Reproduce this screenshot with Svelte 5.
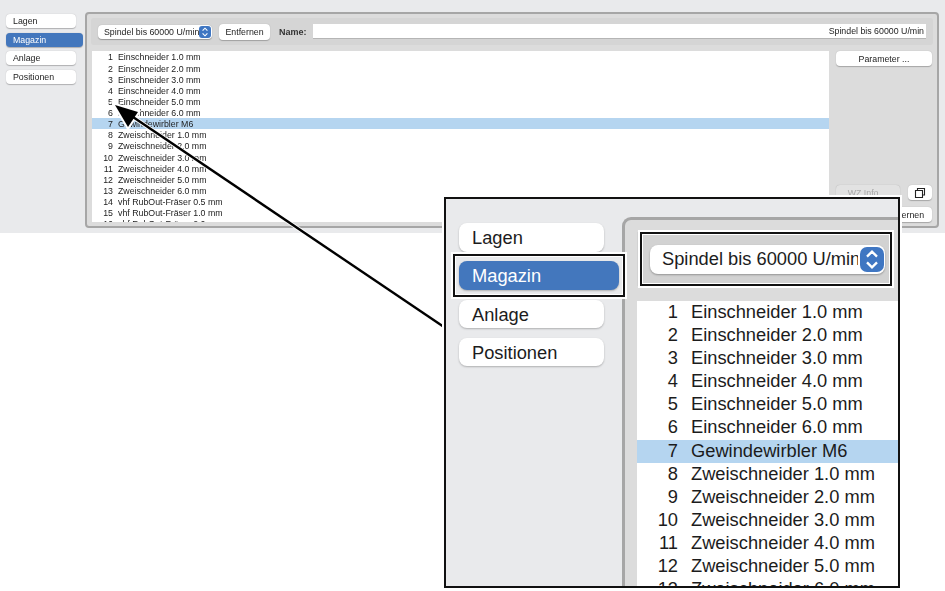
<script lang="ts">
  const tabs = ["Lagen", "Magazin", "Anlage", "Positionen"];
  const active = "Magazin";
  const spindle = "Spindel bis 60000 U/min";

  const tools = [
    "Einschneider 1.0 mm",
    "Einschneider 2.0 mm",
    "Einschneider 3.0 mm",
    "Einschneider 4.0 mm",
    "Einschneider 5.0 mm",
    "Einschneider 6.0 mm",
    "Gewindewirbler M6",
    "Zweischneider 1.0 mm",
    "Zweischneider 2.0 mm",
    "Zweischneider 3.0 mm",
    "Zweischneider 4.0 mm",
    "Zweischneider 5.0 mm",
    "Zweischneider 6.0 mm",
    "vhf RubOut-Fräser 0.5 mm",
    "vhf RubOut-Fräser 1.0 mm",
    "vhf RubOut-Fräser 2.0 mm",
  ];
  const selected = 7;
</script>

{#snippet sidebar()}
  <nav class="tabs">
    {#each tabs as tab}
      <div class="tab" class:active={tab === active}>{tab}</div>
    {/each}
  </nav>
{/snippet}

{#snippet select()}
  <div class="select">
    <span class="select-text">{spindle}</span>
    <span class="stepper">
      <svg viewBox="0 0 12 14" aria-hidden="true">
        <path d="M3.2 5.4 6 2.6l2.8 2.8M3.2 8.6 6 11.4l2.8-2.8" />
      </svg>
    </span>
  </div>
{/snippet}

{#snippet list()}
  <div class="list">
    {#each tools as tool, i}
      <div class="row" class:selected={i + 1 === selected}>
        <span class="num">{i + 1}</span>
        <span>{tool}</span>
      </div>
    {/each}
  </div>
{/snippet}

<div class="page">
  <section class="shot">
    {@render sidebar()}
    <div class="panel">
      <div class="topbar">
        {@render select()}
        <button class="btn remove">Entfernen</button>
        <span class="name-label">Name:</span>
        <div class="name-input">{spindle}</div>
      </div>
      <div class="body">
        {@render list()}
        <aside class="side">
          <button class="btn">Parameter ...</button>
          <div class="side-row">
            <button class="btn info">WZ Info ...</button>
            <button class="btn copy" aria-label="Kopieren">
              <svg viewBox="0 0 12 12" aria-hidden="true">
                <path d="M3.5 3V1.5h7v6.5H8.5M1.5 3.5h7v7h-7z" />
              </svg>
            </button>
          </div>
          <button class="btn remove-tool">Entfernen</button>
        </aside>
      </div>
    </div>
  </section>

  <svg class="arrow" viewBox="0 0 945 591" aria-hidden="true">
    <path class="halo" d="M444 327 130 115" />
    <path class="halo" d="M115 105 138 112 128 127Z" />
    <path class="line" d="M444 327 130 115" />
    <path class="head" d="M115 105 138 112 128 127Z" />
  </svg>

  <section class="callout">
    {@render sidebar()}
    <div class="panel">
      <div class="topbar">
        {@render select()}
      </div>
      {@render list()}
    </div>
    <div class="mark mark-tab"></div>
    <div class="mark mark-select"></div>
  </section>
</div>

<style>
  :global(body) {
    margin: 0;
    background: #fff;
  }
  .page {
    position: relative;
    width: 945px;
    height: 591px;
    overflow: hidden;
    background: #fff;
    font-family: "Liberation Sans", Arial, sans-serif;
    color: #1c1c1c;
  }

  /* small screenshot at the top */
  .shot {
    display: flex;
    box-sizing: border-box;
    height: 233px;
    padding: 12px 6px 5px 6px;
    background: #e9eaec;
    font-size: 8.8px;
    filter: blur(0.3px);
  }
  .shot .tabs {
    display: flex;
    flex-direction: column;
    gap: 4.7px;
    width: 79px;
    padding-top: 2px;
  }
  .shot .tab {
    box-sizing: border-box;
    width: 70px;
    height: 14px;
    line-height: 15px;
    padding-left: 7px;
    border-radius: 4px;
    background: #fff;
    box-shadow: 0 0.5px 1px rgba(0, 0, 0, 0.25);
  }
  .shot .tab.active {
    width: 77px;
    background: #4377bd;
    color: #fff;
  }
  .shot .panel {
    flex: 1;
    display: flex;
    flex-direction: column;
    gap: 6.4px;
    padding: 4px;
    border: 2px solid #a6a6a6;
    border-radius: 4px;
    background: #dcdcdc;
  }
  .shot .topbar {
    display: flex;
    align-items: center;
    flex-shrink: 0;
    height: 27px;
    padding: 0 7px;
    border-radius: 3px;
    background: #d5d5d5;
  }
  .shot .select {
    display: flex;
    align-items: center;
    justify-content: space-between;
    box-sizing: border-box;
    width: 114px;
    height: 14px;
    padding: 0 1px 0 6px;
    border-radius: 4px;
    background: #fff;
    box-shadow: 0 0.5px 1px rgba(0, 0, 0, 0.3);
  }
  .shot .select-text {
    width: 95px;
    overflow: hidden;
    white-space: nowrap;
  }
  .shot .stepper {
    width: 12px;
    height: 12px;
    border-radius: 3px;
  }
  .shot .remove {
    width: 51px;
    height: 16px;
    margin-left: 7px;
  }
  .name-label {
    margin: 0 6px 0 9px;
    font-weight: 700;
    font-size: 9px;
    color: #333;
  }
  .name-input {
    flex: 1;
    height: 14px;
    line-height: 14px;
    padding-right: 2px;
    text-align: right;
    background: #fff;
    border-bottom: 1px solid #b5b5b5;
  }
  .shot .body {
    flex: 1;
    display: flex;
    gap: 7px;
    min-height: 0;
    padding: 0 1px;
  }
  .shot .list {
    flex: 1;
    min-height: 0;
  }
  .list {
    overflow: hidden;
    background: #fff;
  }
  .row {
    display: flex;
    white-space: nowrap;
  }
  .row.selected {
    background: #b5d5f0;
  }
  .num {
    text-align: right;
  }
  .shot .row {
    height: 11.14px;
    line-height: 12px;
    gap: 5px;
  }
  .shot .num {
    width: 21px;
  }
  .side {
    display: flex;
    flex-direction: column;
    width: 96px;
  }
  .btn {
    height: 15px;
    padding: 0;
    border: none;
    border-radius: 4px;
    background: #fff;
    color: inherit;
    font: inherit;
    box-shadow: 0 0.5px 1px rgba(0, 0, 0, 0.25);
  }
  .side-row {
    display: flex;
    justify-content: space-between;
    margin-top: auto;
  }
  .info {
    width: 64px;
    background: #e2e2e2;
    color: #a8a8a8;
  }
  .copy {
    display: flex;
    align-items: center;
    justify-content: center;
    width: 24px;
  }
  .copy svg {
    width: 12px;
    height: 12px;
    fill: none;
    stroke: #222;
    stroke-width: 1.1;
  }
  .remove-tool {
    align-self: flex-end;
    width: 54px;
    margin-top: 7px;
    flex-shrink: 0;
  }

  /* shared stepper */
  .stepper {
    display: flex;
    flex-shrink: 0;
    background: #3f76c2;
  }
  .stepper svg {
    width: 100%;
    height: 100%;
    fill: none;
    stroke: #fff;
    stroke-width: 1.3;
  }

  /* enlarged callout */
  .callout {
    position: absolute;
    left: 444px;
    top: 197px;
    display: flex;
    box-sizing: border-box;
    width: 456px;
    height: 391px;
    padding: 20px 0 0 13px;
    overflow: hidden;
    border: 2px solid #111;
    background: #e9eaec;
    outline: 2px solid #fff;
    font-size: 18.3px;
  }
  .callout .tabs {
    display: flex;
    flex-direction: column;
    gap: 9.8px;
    flex-shrink: 0;
    width: 163px;
    padding-top: 4px;
  }
  .callout .tab {
    box-sizing: border-box;
    width: 145px;
    height: 28.5px;
    line-height: 30px;
    padding-left: 13px;
    border-radius: 8px;
    background: #fff;
    box-shadow: 0 1px 2px rgba(0, 0, 0, 0.25);
  }
  .callout .tab.active {
    width: 160px;
    background: #4377bd;
    color: #fff;
  }
  .callout .panel {
    flex: 1;
    display: flex;
    flex-direction: column;
    min-width: 0;
    margin-top: -2px;
    padding: 12px 0 0 12px;
    border: solid #a6a6a6;
    border-width: 3px 0 0 3px;
    border-radius: 9px 0 0 0;
    background: #dcdcdc;
  }
  .callout .topbar {
    display: flex;
    align-items: center;
    flex-shrink: 0;
    box-sizing: border-box;
    height: 54px;
    margin-right: 9px;
    padding: 0 4px 0 13px;
    background: #d2d2d2;
  }
  .callout .select {
    display: flex;
    align-items: center;
    justify-content: space-between;
    flex: 1;
    min-width: 0;
    box-sizing: border-box;
    height: 29px;
    padding: 0 1px 0 12px;
    border-radius: 8px;
    background: #fff;
    box-shadow: 0 1px 2px rgba(0, 0, 0, 0.3);
  }
  .callout .select-text {
    flex: 0 0 196px;
    overflow: hidden;
    white-space: nowrap;
  }
  .callout .stepper {
    width: 24px;
    height: 25px;
    border-radius: 7px;
  }
  .callout .list {
    flex: 1;
    min-height: 0;
    margin-top: 15px;
  }
  .callout .row {
    height: 23.1px;
    line-height: 21.5px;
    gap: 13px;
  }
  .callout .num {
    width: 41px;
  }
  .mark {
    position: absolute;
    box-sizing: border-box;
    border: 2px solid #111;
    outline: 2px solid #fff;
    box-shadow: inset 0 0 0 1px #fff;
  }
  .mark-tab {
    left: 7px;
    top: 55px;
    width: 172px;
    height: 43px;
  }
  .mark-select {
    left: 194px;
    top: 33px;
    width: 252px;
    height: 54px;
  }

  .arrow {
    position: absolute;
    inset: 0;
    width: 945px;
    height: 591px;
  }
  .arrow .halo {
    fill: #fff;
    stroke: #fff;
    stroke-width: 4;
  }
  .arrow .line {
    fill: none;
    stroke: #000;
    stroke-width: 2.4;
  }
  .arrow .head {
    fill: #000;
  }
</style>
